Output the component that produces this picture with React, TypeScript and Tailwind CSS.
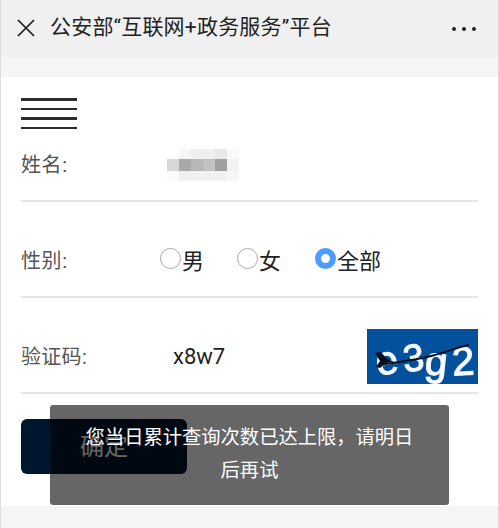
const CJK = "font-['Roboto','Noto_Sans_CJK_SC','Noto_Sans',sans-serif]";

// mosaic that hides the name in the screenshot
const MOSAIC = [
  ["#ffffff", "#f6f6f6", "#efefef", "#efefef", "#e9e9e9", "#f9f9f9"],
  ["#d8d8d8", "#a9a9a9", "#b8b8b8", "#c2c2c2", "#a0a0a0", "#f2f2f2"],
  ["#fafafa", "#f1f1f1", "#f1f1f1", "#f1f1f1", "#f1f1f1", "#f6f6f6"],
];

function Radio({ label, checked, className }: { label: string; checked?: boolean; className?: string }) {
  return (
    <div className={`flex items-start ${className ?? ""}`}>
      {checked ? (
        <span className="mr-px box-border h-[21px] w-[21px] rounded-full border-[6px] border-[#4d9bff] bg-white" />
      ) : (
        <span className="mr-px box-border h-[21px] w-[21px] rounded-full border border-[#aaaaaa] bg-white" />
      )}
      <span className="mt-[1px] text-[22px] leading-[26px] text-[#222222]">{label}</span>
    </div>
  );
}

function Captcha() {
  return (
    <svg width="111" height="55" viewBox="0 0 111 55" className="block">
      <rect width="111" height="55" fill="#03519c" />
      <g className="blur-[0.5px]" fill="#ffffff" fontFamily="'Liberation Sans', sans-serif" stroke="#eef3fa" strokeWidth="1.2">
        <text x="9" y="45" fontSize="40" transform="rotate(-10 20 34)">e</text>
        <text x="36" y="42" fontSize="38" transform="rotate(-6 46 30)">3</text>
        <text x="58" y="46" fontSize="40" transform="rotate(6 68 36)">g</text>
        <text x="85" y="46" fontSize="40" transform="rotate(-3 96 30)">2</text>
      </g>
      <path d="M16 35 C30 34 45 31 60 28 C74 25 88 19 101 16" fill="none" stroke="#06101c" strokeWidth="2" strokeLinecap="round" />
      <path d="M8 24 L14 23 L19 29 L27 33 L19 34 L13 39 L9 38 L13 32 Z" fill="#06101c" />
    </svg>
  );
}

export default function App() {
  return (
    <div className={`relative flex h-[528px] w-[499px] flex-col overflow-hidden border-x border-l-[#dddddd] border-r-[#dcdcdc] bg-[#f5f5f5] ${CJK}`}>
      <div className="flex h-[57px] items-center bg-[#f0f0f0] pl-[16px] pr-[22px]">
        <svg width="18" height="18" viewBox="0 0 18 18" fill="none" stroke="#1c1c1c" strokeWidth="1.7" className="mb-[2px] shrink-0">
          <path d="M1 1 L17 17 M17 1 L1 17" />
        </svg>
        <div className="mb-[2px] ml-[15px] flex-1 text-[21px] leading-none tracking-[0.2px] text-[#222222]">公安部“互联网+政务服务”平台</div>
        <div className="flex gap-[6px]">
          <span className="h-1 w-1 rounded-full bg-[#222222]" />
          <span className="h-1 w-1 rounded-full bg-[#222222]" />
          <span className="h-1 w-1 rounded-full bg-[#222222]" />
        </div>
      </div>

      <div className="mt-5 h-[429px] bg-white px-5 pt-[21px]">
        <div className="flex w-[56px] flex-col gap-[7px]">
          <span className="h-[2.5px] bg-[#2c2c2c]" />
          <span className="h-[2.5px] bg-[#2c2c2c]" />
          <span className="h-[2.5px] bg-[#2c2c2c]" />
          <span className="h-[2.5px] bg-[#2c2c2c]" />
        </div>

        <div className="flex h-[73px] items-center border-b-2 border-[#e6e6e6] text-[20px] text-[#555555]">
          <span className="w-[146px] tracking-[0.6px]">姓名:</span>
          <div className="grid grid-cols-[repeat(6,12px)] grid-rows-[10px_12px_10px]">
            {MOSAIC.flat().map((c, i) => (
              <span key={i} style={{ backgroundColor: c }} />
            ))}
          </div>
        </div>

        <div className="flex h-[96px] items-center border-b-2 border-[#e6e6e6] pt-[24px]">
          <span className="w-[139px] text-[20px] tracking-[0.6px] text-[#555555]">性别:</span>
          <div className="flex">
            <Radio label="男" className="w-[77px]" />
            <Radio label="女" className="w-[78px]" />
            <Radio label="全部" checked />
          </div>
        </div>

        <div className="flex h-[96px] items-center border-b-2 border-[#e6e6e6] pt-[23px]">
          <span className="w-[152px] text-[20px] tracking-[0.3px] text-[#555555]">验证码:</span>
          <span className="flex-1 text-[22px] text-[#222222]">x8w7</span>
          <Captcha />
        </div>

        <button className="mt-[25px] flex h-[55px] w-[166px] items-center justify-center rounded-md bg-[#00162e] text-[24px] text-white">
          确定
        </button>
      </div>

      <div className="absolute left-[49px] top-[405px] flex h-[100px] w-[399px] items-center justify-center rounded-[3px] bg-black/60 px-[30px] pb-[2px] text-center text-[19.3px] leading-[33px] text-white">
        您当日累计查询次数已达上限，请明日后再试
      </div>
    </div>
  );
}
